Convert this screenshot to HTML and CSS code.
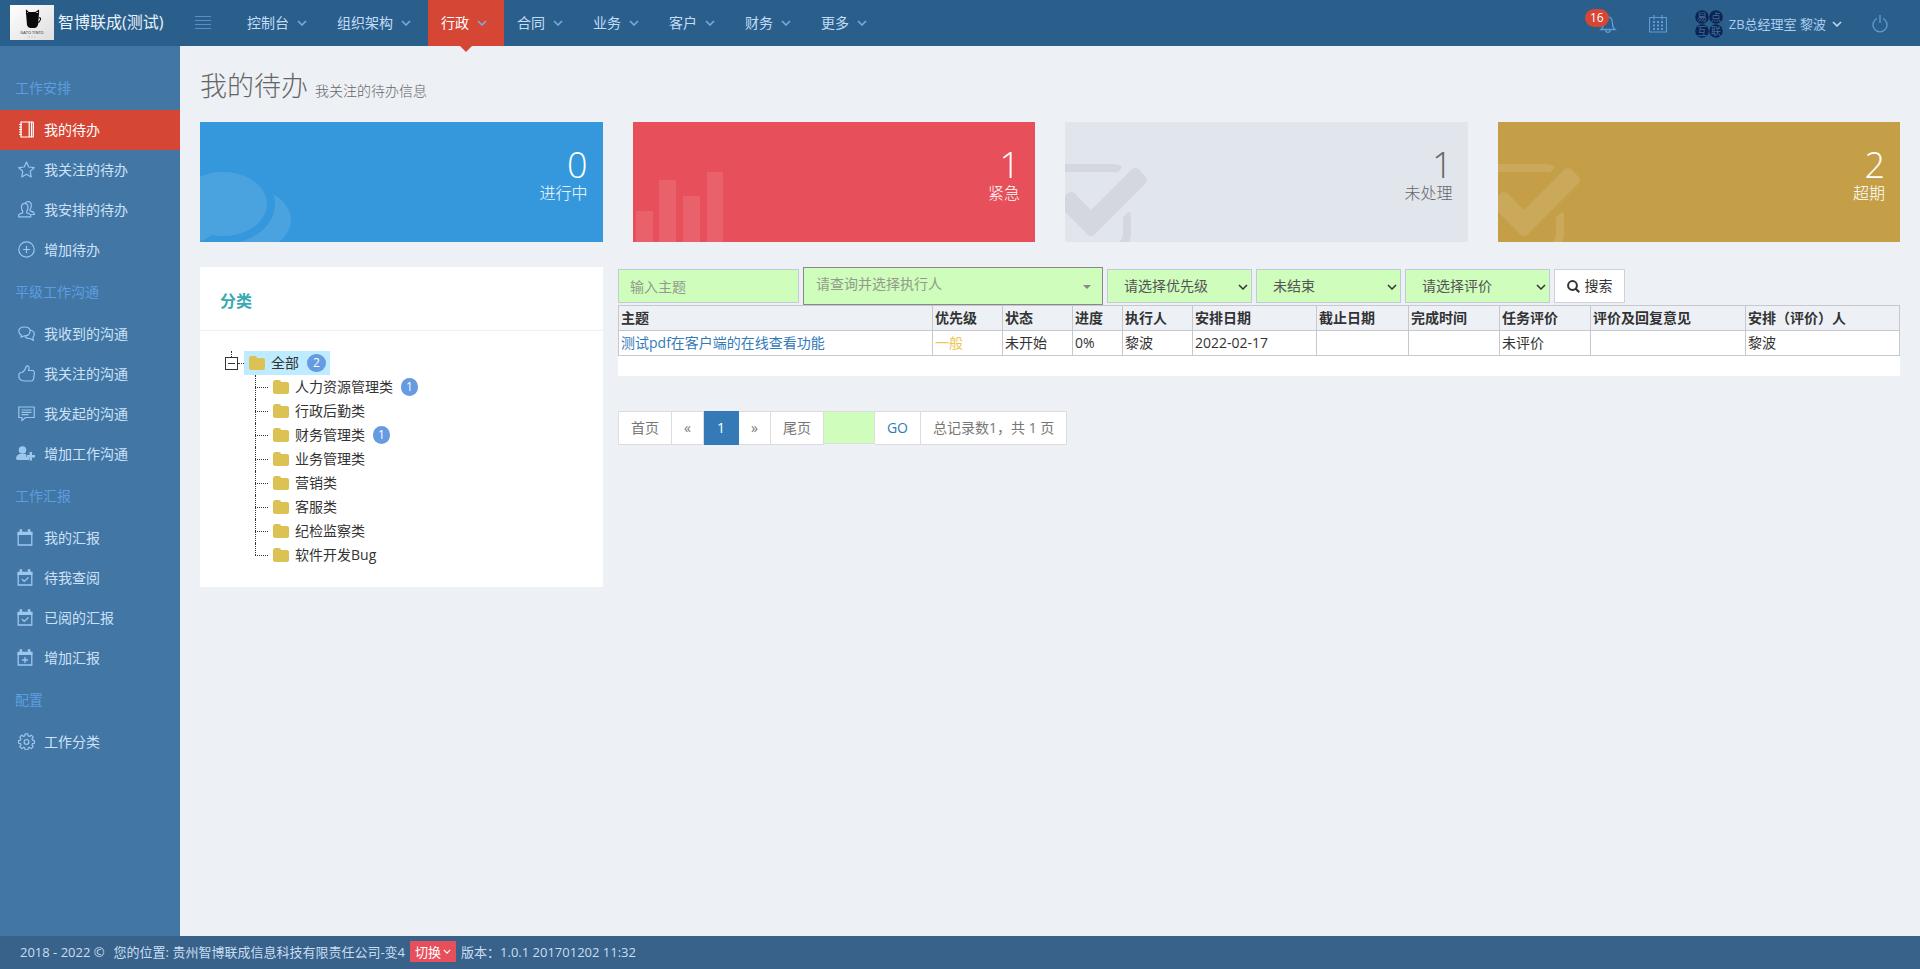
FILE: index.html
```html
<!DOCTYPE html>
<html lang="zh-CN">
<head>
<meta charset="utf-8">
<title>我的待办</title>
<link rel="stylesheet" href="styles.css">
</head>
<body>
<svg class="defs" aria-hidden="true">
  <symbol id="caret" viewBox="0 0 10 6"><path d="M1 1l4 4 4-4" fill="none" stroke="currentColor" stroke-width="1.5"/></symbol>
  <symbol id="folder" viewBox="0 0 16 14"><path d="M0 2.5Q0 0 2 0h4q2 0 2 2h6q2 0 2 2v8q0 2-2 2H2q-2 0-2-2z" fill="currentColor"/></symbol>
  <symbol id="cal" viewBox="0 0 16 17"><path d="M1.2 4h13.6v12H1.2z" fill="none" stroke="currentColor" stroke-width="1.3"/><path d="M.6 2.8h2V1q0-1 1.3-1t1.3 1v1.8h5.6V1q0-1 1.3-1t1.3 1v1.8h2V6H.6z" fill="currentColor"/></symbol>
  <symbol id="calcheck" viewBox="0 0 16 17"><use href="#cal"/><path d="M4.8 10l2.4 2.4 4.3-4" fill="none" stroke="currentColor" stroke-width="1.3"/></symbol>
  <symbol id="calplus" viewBox="0 0 16 17"><use href="#cal"/><path d="M8 8v6M5 11h6" fill="none" stroke="currentColor" stroke-width="1.3"/></symbol>
  <symbol id="check" viewBox="0 0 1792 1792"><path fill="currentColor" d="M1472 930v318q0 119-84.5 203.5t-203.5 84.5h-832q-119 0-203.5-84.5t-84.5-203.5v-832q0-119 84.5-203.5t203.5-84.5h832q63 0 117 25 15 7 18 23 3 17-9 29l-49 49q-10 10-23 10-3 0-9-2-23-6-45-6h-832q-66 0-113 47t-47 113v832q0 66 47 113t113 47h832q66 0 113-47t47-113v-254q0-13 9-22l64-64q10-10 23-10 6 0 12 3 20 8 20 29zm231-489l-814 814q-24 24-57 24t-57-24l-430-430q-24-24-24-57t24-57l110-110q24-24 57-24t57 24l263 263 647-647q24-24 57-24t57 24l110 110q24 24 24 57t-24 57z"/></symbol>
</svg>

<header class="topbar">
  <a class="brand" href="#">
    <svg class="logo" viewBox="0 0 44 35">
      <defs><linearGradient id="lg" x1="0" y1="0" x2="1" y2="1"><stop offset="0" stop-color="#fff"/><stop offset="1" stop-color="#dedede"/></linearGradient></defs>
      <path fill="url(#lg)" d="M0 0h44v35H0z"/>
      <path fill="#0a0a0a" d="M16 8h13l-1 12q-1 3-3 3h-5q-2 0-3-3z"/>
      <path d="M16.500 9V5.500l2 2h7l3-2V9M28.500 13q2.500-.8 2 1.500t-3 3.500" fill="none" stroke="#0a0a0a" stroke-width="1.100"/>
      <text class="logo-name" x="22" y="29" text-anchor="middle">GATO TINTO</text>
      <path d="M18 32h9" stroke="#bbb" stroke-width=".7" stroke-dasharray="2 1"/>
    </svg>
    <span>智博联成(测试)</span>
  </a>
  <button class="toggler" type="button" aria-label="菜单"><svg width="16" height="14" viewBox="0 0 16 14"><path d="M0 .5h16M0 4.500h16M0 8.500h16M0 12.500h16" stroke="currentColor"/></svg></button>
  <nav class="mainnav">
    <a href="#">控制台<svg class="caret"><use href="#caret"/></svg></a>
    <a href="#">组织架构<svg class="caret"><use href="#caret"/></svg></a>
    <a href="#" class="current">行政<svg class="caret"><use href="#caret"/></svg></a>
    <a href="#">合同<svg class="caret"><use href="#caret"/></svg></a>
    <a href="#">业务<svg class="caret"><use href="#caret"/></svg></a>
    <a href="#">客户<svg class="caret"><use href="#caret"/></svg></a>
    <a href="#">财务<svg class="caret"><use href="#caret"/></svg></a>
    <a href="#">更多<svg class="caret"><use href="#caret"/></svg></a>
  </nav>
  <div class="tools">
    <button class="tool bell" type="button" aria-label="通知"><svg width="18" height="18" viewBox="0 0 18 18" fill="none" stroke="currentColor" stroke-width="1.300"><path d="M2 14.500h14q-2.500-2-2.500-6Q13.500 2 9 2T4.500 8.500q0 4-2.500 6zM6.800 15q0 2.300 2.200 2.300t2.200-2.300"/></svg><span class="count">16</span></button>
    <button class="tool" type="button" aria-label="日历"><svg width="18" height="18" viewBox="0 0 18 18"><path d="M.5 2.500h17v14.500H.5zM5 0v4.500M13 0v4.500" fill="none" stroke="currentColor" stroke-width="1.200"/><path d="M4 6h2v2H4zM8 6h2v2H8zM12 6h2v2h-2zM4 9.500h2v2H4zM8 9.500h2v2H8zM12 9.500h2v2h-2zM4 13h2v2H4zM8 13h2v2H8zM12 13h2v2h-2z" fill="currentColor"/></svg></button>
    <button class="user" type="button">
      <svg class="avatar" viewBox="0 0 28 28"><g fill="#0d2450"><circle cx="7" cy="7" r="6.800"/><circle cx="21" cy="7" r="6.800"/><circle cx="7" cy="21" r="6.800"/><circle cx="21" cy="21" r="6.800"/></g><g text-anchor="middle"><text x="7" y="11">易</text><text x="21" y="11">点</text><text x="7" y="25">互</text><text x="21" y="25">联</text></g></svg>
      <span>ZB总经理室 黎波</span><svg class="caret"><use href="#caret"/></svg>
    </button>
    <button class="tool" type="button" aria-label="退出"><svg width="16" height="18" viewBox="0 0 16 18" fill="none" stroke="currentColor" stroke-width="1.300"><path d="M5 3.500a7 7 0 1 0 6 0M8 0v8"/></svg></button>
  </div>
</header>

<div class="body">
  <aside class="sidebar">
    <h3>工作安排</h3>
    <a href="#" class="active"><svg viewBox="0 0 17 17"><path d="M3 1h10.500v15H3zM11.200 1v15M15.300 1v15M13.500 1h2M13.500 16h2M1 3.500h3M1 6h3M1 8.500h3M1 11h3M1 13.500h3" fill="none" stroke="currentColor" stroke-width="1.200"/></svg>我的待办</a>
    <a href="#"><svg viewBox="0 0 17 17"><path d="M8.500 1l2.300 5 5.400.7-4 3.700 1 5.500-4.700-2.700-4.700 2.700 1-5.500-4-3.700L6.200 6z" fill="none" stroke="currentColor" stroke-width="1.200" stroke-linejoin="round"/></svg>我关注的待办</a>
    <a href="#"><svg viewBox="0 0 17 17"><path d="M.7 15.800v-2q1-1.300 4-2v-1.500Q3.500 9 3.500 6.300q0-4 3.200-4T10 6.300q0 2.700-1.300 4v1.500q3.200.7 4 2v2zM7 2Q8 .7 10 .7q3.300 0 3.300 4 0 2.300-1.300 3.600v1.500q3.500.8 4.300 2.400v1.300h-3" fill="none" stroke="currentColor" stroke-width="1.200"/></svg>我安排的待办</a>
    <a href="#"><svg viewBox="0 0 17 17"><path d="M8.500 5v7M5 8.500h7" fill="none" stroke="currentColor" stroke-width="1.200"/><circle cx="8.500" cy="8.500" r="7.700" fill="none" stroke="currentColor" stroke-width="1.200"/></svg>增加待办</a>
    <h3>平级工作沟通</h3>
    <a href="#"><svg viewBox="0 0 17 17"><path d="M3.500 10.500Q.8 9 .8 6.300.8 2 6.500 2T12 6.300q0 4.500-5.500 4.500L3 12.300zM12.300 5q4 .8 4 4.200 0 2.200-1.500 3.200l.7 3-3-1.700q-4 .3-5.500-2" fill="none" stroke="currentColor" stroke-width="1.200" stroke-linejoin="round"/></svg>我收到的沟通</a>
    <a href="#"><svg viewBox="0 0 17 17"><path d="M4 15.500Q.8 14.500.8 10.500q0-3 2.400-3 2.300 0 4-3.500Q8 .8 9.300.8 12 1 10.500 5.500h4q2 0 1.800 3l-.8 5.500q-.3 2-2.500 2H7z" fill="none" stroke="currentColor" stroke-width="1.200" stroke-linejoin="round"/></svg>我关注的沟通</a>
    <a href="#"><svg viewBox="0 0 17 17"><path d="M.8 2h15.400v10.500H7.500L4 15.500v-3H.8zM3.500 5h10M3.500 7.300h10M3.500 9.600h7" fill="none" stroke="currentColor" stroke-width="1.200"/></svg>我发起的沟通</a>
    <a href="#"><svg class="wide" viewBox="0 0 19 17"><g fill="currentColor"><circle cx="6.500" cy="5" r="3.800"/><path d="M3 9h7v3h3v3H1.500Q0 15 0 13t3-4zM13.500 7h2.500v3h3v2.500h-3v3h-2.500v-3h-2.800V10h2.800z"/></g></svg>增加工作沟通</a>
    <h3>工作汇报</h3>
    <a href="#"><svg class="wide" viewBox="-1 0 19 17"><use href="#cal" width="16" height="17"/></svg>我的汇报</a>
    <a href="#"><svg class="wide" viewBox="-1 0 19 17"><use href="#calcheck" width="16" height="17"/></svg>待我查阅</a>
    <a href="#"><svg class="wide" viewBox="-1 0 19 17"><use href="#calcheck" width="16" height="17"/></svg>已阅的汇报</a>
    <a href="#"><svg class="wide" viewBox="-1 0 19 17"><use href="#calplus" width="16" height="17"/></svg>增加汇报</a>
    <h3>配置</h3>
    <a href="#"><svg viewBox="0 0 17 17" fill="none" stroke="currentColor" stroke-width="1.200"><path stroke-linejoin="round" d="M7.200.8h2.600l.5 2.100 1.200.5 1.800-1.200 1.900 1.900-1.200 1.800.5 1.200 2 .5v2.600l-2 .5-.5 1.200 1.200 1.800-1.900 1.900-1.800-1.200-1.200.5-.5 2H7.200l-.5-2-1.200-.5-1.800 1.200-1.900-1.900L3 11.900l-.5-1.200-2-.5V7.600l2-.5L3 5.900 1.800 4.100l1.900-1.900 1.800 1.200 1.200-.5z"/><circle cx="8.500" cy="8.900" r="2.400"/></svg>工作分类</a>
  </aside>

  <main class="content">
    <h1>我的待办 <small>我关注的待办信息</small></h1>

    <section class="stats">
      <a href="#" class="stat blue"><svg class="art chat" viewBox="0 0 1792 1792"><path fill="currentColor" d="M1408 768q0 139-94 257t-256.500 186.500-353.500 68.500q-86 0-176-16-124 88-278 128-36 9-86 16h-3q-11 0-20.500-8t-11.500-21q-1-3-1-6.500t.5-6.500 2-6l2.500-5 3.500-5.500 4-5 4.500-5 4-4.500q5-6 23-25t26-29.500 22.500-29 25-38.500 20.500-44q-124-72-195-177t-71-224q0-139 94-257t256.500-186.500 353.500-68.500 353.500 68.500 256.500 186.500 94 257zm384 256q0 120-71 224.500t-195 176.500q10 24 20.500 44t25 38.500 22.500 29 26 29.500 23 25q1 1 4 4.500t4.500 5 4 5 3.500 5.500l2.500 5 2 6 .5 6.500-1 6.500q-3 14-13 22t-22 7q-50-7-86-16-154-40-278-128-90 16-176 16-271 0-472-132 58 4 88 4 161 0 309-45t264-129q125-92 192-212t67-254q0-77-23-152 129 71 204 180t75 234z"/></svg><b>0</b><span>进行中</span></a>
      <a href="#" class="stat red"><svg class="art bars" viewBox="0 0 92 70"><path fill="currentColor" d="M3 39h17v31H3zM26 8h17v62H26zM50 24h17v46H50zM74 0h16v70H74z"/></svg><b>1</b><span>紧急</span></a>
      <a href="#" class="stat grey"><svg class="art tick"><use href="#check"/></svg><b>1</b><span>未处理</span></a>
      <a href="#" class="stat gold"><svg class="art tick"><use href="#check"/></svg><b>2</b><span>超期</span></a>
    </section>

    <div class="columns">
      <section class="panel">
        <h2>分类</h2>
        <div class="tree">
          <div class="root"><button class="fold" type="button" aria-label="折叠"></button><a href="#" class="node selected"><svg class="folder"><use href="#folder"/></svg>全部<span class="pill">2</span></a></div>
          <ul>
            <li><a href="#" class="node"><svg class="folder"><use href="#folder"/></svg>人力资源管理类<span class="pill">1</span></a></li>
            <li><a href="#" class="node"><svg class="folder"><use href="#folder"/></svg>行政后勤类</a></li>
            <li><a href="#" class="node"><svg class="folder"><use href="#folder"/></svg>财务管理类<span class="pill">1</span></a></li>
            <li><a href="#" class="node"><svg class="folder"><use href="#folder"/></svg>业务管理类</a></li>
            <li><a href="#" class="node"><svg class="folder"><use href="#folder"/></svg>营销类</a></li>
            <li><a href="#" class="node"><svg class="folder"><use href="#folder"/></svg>客服类</a></li>
            <li><a href="#" class="node"><svg class="folder"><use href="#folder"/></svg>纪检监察类</a></li>
            <li><a href="#" class="node"><svg class="folder"><use href="#folder"/></svg>软件开发Bug</a></li>
          </ul>
        </div>
      </section>

      <section class="results">
        <form class="filters">
          <input class="field" type="text" placeholder="输入主题" aria-label="主题">
          <button class="combo" type="button" aria-haspopup="listbox">请查询并选择执行人</button>
          <span class="pick"><select aria-label="优先级"><option>请选择优先级</option></select><svg class="caret"><use href="#caret"/></svg></span>
          <span class="pick"><select aria-label="状态"><option>未结束</option></select><svg class="caret"><use href="#caret"/></svg></span>
          <span class="pick"><select aria-label="评价"><option>请选择评价</option></select><svg class="caret"><use href="#caret"/></svg></span>
          <button class="search" type="button"><svg width="13" height="13" viewBox="0 0 13 13"><circle cx="5.500" cy="5.500" r="4.400" fill="none" stroke="currentColor" stroke-width="2"/><path d="M8.700 8.700l3.500 3.500" stroke="currentColor" stroke-width="2.200"/></svg>搜索</button>
        </form>
        <div class="tablewrap">
          <table>
            <colgroup><col><col class="w70"><col class="w70"><col class="w50"><col class="w70"><col class="w124"><col class="w92"><col class="w91"><col class="w91"><col class="w155"><col class="w154"></colgroup>
            <thead><tr><th>主题</th><th>优先级</th><th>状态</th><th>进度</th><th>执行人</th><th>安排日期</th><th>截止日期</th><th>完成时间</th><th>任务评价</th><th>评价及回复意见</th><th>安排（评价）人</th></tr></thead>
            <tbody><tr><td><a href="#">测试pdf在客户端的在线查看功能</a></td><td class="normal">一般</td><td>未开始</td><td>0%</td><td>黎波</td><td>2022-02-17</td><td></td><td></td><td>未评价</td><td></td><td>黎波</td></tr></tbody>
          </table>
        </div>
        <nav class="pager" aria-label="分页">
          <a href="#">首页</a><a href="#">«</a><a href="#" class="on">1</a><a href="#">»</a><a href="#">尾页</a><input type="text" aria-label="页码"><a href="#" class="go">GO</a><span>总记录数1，共 1 页</span>
        </nav>
      </section>
    </div>
  </main>
</div>

<footer class="footer">
  <span class="years">2018 - 2022 ©</span>
  <span>您的位置: 贵州智博联成信息科技有限责任公司-变4</span>
  <button type="button">切换<svg class="caret"><use href="#caret"/></svg></button>
  <span>版本：1.0.1 201701202 11:32</span>
</footer>
</body>
</html>
```
FILE: styles.css
```css
* { box-sizing: border-box; }
body {
  margin: 0;
  min-height: 100vh;
  display: flex;
  flex-direction: column;
  background: #edf1f6;
  color: #333;
  font: 14px/20px "Open Sans", "Noto Sans CJK SC", sans-serif;
}
a { color: inherit; text-decoration: none; }
button, input, select { font: inherit; color: inherit; margin: 0; border: 0; border-radius: 0; background: none; }
button { padding: 0; cursor: pointer; }
svg { flex: none; display: block; }
h1, h2, h3, ul { margin: 0; padding: 0; font-weight: 400; }
.defs { position: absolute; width: 0; height: 0; }
.caret { width: 10px; height: 6px; }

.topbar { display: flex; align-items: stretch; height: 46px; background: #2b5f8b; color: #c2ddf7; }
.brand { display: flex; align-items: center; gap: 4px; width: 195px; padding: 0 0 2px 10px; color: #e8f2fc; font-size: 16px; }
.logo { width: 44px; height: 35px; }
.logo-name { font-family: "Open Sans", sans-serif; font-size: 4px; fill: #222; }
.toggler { width: 16px; color: #5590c8; }
.mainnav { display: flex; margin-left: 23px; }
.mainnav a { position: relative; display: flex; align-items: center; gap: 8px; padding: 0 17px 0 13px; }
.mainnav .caret { color: #7caee0; }
.mainnav .current { background: #d64635; color: #fff; }
.mainnav .current::after { content: ""; position: absolute; left: 50%; top: 100%; margin-left: -6px; border: 6px solid transparent; border-top-color: #d64635; border-bottom: 0; }
.tools { display: flex; align-items: center; margin-left: auto; padding: 2px 32px 0 0; gap: 28px; }
.tool { color: #5e9cd6; }
.bell { position: relative; margin-right: 4px; }
.count { position: absolute; left: -14px; top: -6px; width: 24px; height: 18px; border-radius: 9px; background: #d64635; color: #fff; font-size: 12px; line-height: 18px; }
.user { display: flex; align-items: center; gap: 6px; margin-right: 2px; font-size: 13px; color: #a9cdf0; }
.avatar { width: 28px; height: 28px; font-size: 10px; fill: #3d6c9d; }
.user .caret { color: #c2ddf7; }

.body { flex: 1; display: flex; }
.sidebar { flex: none; width: 180px; padding-top: 20px; background: #4276a5; color: #cce2f8; }
.sidebar h3 { padding: 12px 15px; font-size: 14px; line-height: 20px; color: #5c9edf; }
.sidebar a { display: flex; align-items: center; gap: 9px; height: 40px; padding-left: 18px; }
.sidebar a svg { width: 17px; height: 17px; margin-bottom: 2px; color: #9cc6ee; }
.sidebar a .wide { width: 19px; margin-left: -2px; }
.sidebar .active, .sidebar .active svg { color: #fff; }
.sidebar .active { background: #d64635; }

.content { flex: 1; min-width: 0; padding: 20px; }
h1 { margin-bottom: 11px; font-size: 27px; line-height: 40px; font-weight: 300; color: #666; }
h1 small { font-size: 14px; }
.stats { display: grid; grid-template-columns: repeat(4, 1fr); gap: 30px; margin-bottom: 25px; }
.stat { position: relative; overflow: hidden; display: flex; flex-direction: column; align-items: flex-end; height: 120px; padding: 25px 15px 0; color: #fff; font-weight: 300; }
.stat b { font-size: 36px; line-height: 36px; font-weight: 300; }
.stat span { font-size: 16px; line-height: 20px; }
.blue { background: #3598dc; }
.red { background: #e7505a; }
.grey { background: #e1e5ec; color: #666; }
.gold { background: #c49f47; }
.art { position: absolute; top: 34px; width: 112px; height: 112px; color: #fff; opacity: .1; }
.chat { left: -21px; }
.tick { left: -26px; }
.bars { left: 0; top: 50px; width: 92px; height: 70px; }
.grey .art { color: #6b5b7b; }

.columns { display: grid; grid-template-columns: 403fr 1282fr; gap: 15px; align-items: start; }
.panel { background: #fff; padding-bottom: 20px; }
.panel h2 { padding: 24px 20px 19px; border-bottom: 1px solid #eef1f5; font-size: 16px; line-height: 20px; font-weight: 600; color: #3aa9b2; }
.tree { padding: 20px 25px 0; }
.root { position: relative; display: flex; align-items: center; height: 24px; }
.root::before { content: ""; position: absolute; left: 6px; top: 0; height: 6px; border-left: 1px dotted #333; }
.root::after { content: ""; position: absolute; left: 13px; top: 12px; width: 6px; border-top: 1px dotted #333; }
.fold { width: 13px; height: 13px; margin-right: 6px; border: 1px solid #333; display: grid; place-items: center; }
.fold::before { content: ""; width: 7px; height: 1px; background: #333; }
.node { display: inline-flex; align-items: center; height: 24px; padding: 0 4px 0 5px; }
.selected { background: #beebff; }
.folder { width: 16px; height: 14px; margin-right: 6px; color: #dcc154; }
.pill { min-width: 17px; height: 18px; margin-left: 8px; padding: 0 5px; border-radius: 9px; background: #659be0; color: #fff; font-size: 12px; line-height: 18px; text-align: center; }
.selected .pill { padding: 0 6px; }
.tree ul { list-style: none; margin-left: 30px; }
.tree li { position: relative; display: flex; height: 24px; padding-left: 13px; }
.tree li::before { content: ""; position: absolute; left: 0; top: 0; height: 24px; border-left: 1px dotted #333; }
.tree li::after { content: ""; position: absolute; left: 0; top: 12px; width: 13px; border-top: 1px dotted #333; }
.tree li:last-child::before { height: 12px; }

.filters { display: flex; align-items: center; gap: 4px; height: 38px; }
.field { width: 181px; height: 34px; padding: 0 11px; border: 1px solid #c2cad8; background: #cffdbc; }
.field::placeholder { color: #8f9c8b; opacity: 1; }
.combo { position: relative; width: 300px; height: 38px; padding: 0 12px 4px; border: 1px solid #888; background: #cffdbc; color: #8f9c8b; text-align: left; }
.combo::after { content: ""; position: absolute; right: 11px; top: 17px; border: 4px solid transparent; border-top-color: #888; border-bottom: 0; }
.pick { position: relative; width: 145px; color: #555; }
.pick select { display: block; width: 100%; height: 34px; padding: 0 16px; appearance: none; border: 1px solid #c2cad8; background: #cffdbc; }
.pick .caret { position: absolute; right: 4px; top: 15px; color: #333; }
.search { display: flex; align-items: center; justify-content: center; gap: 5px; width: 71px; height: 34px; border: 1px solid #ccd1dc; background: #fff; }
.tablewrap { padding-bottom: 20px; background: #fff; }
table { width: 100%; table-layout: fixed; border-collapse: collapse; }
.w50 { width: 50px; }
.w70 { width: 70px; }
.w91 { width: 91px; }
.w92 { width: 92px; }
.w124 { width: 124px; }
.w154 { width: 154px; }
.w155 { width: 155px; }
th, td { height: 25px; padding: 2px; border: 1px solid #c6c8ce; text-align: left; white-space: nowrap; line-height: 20px; }
th { background: #edf1f6; font-weight: 700; }
td a { color: #337ab7; }
.normal { color: #f0c550; }
.pager { display: flex; margin-top: 35px; color: #777; }
.pager > * { height: 34px; padding: 6px 12px; border: 1px solid #ddd; background: #fff; }
.pager > * + * { border-left: 0; }
.pager .on { padding: 6px 13px; border-color: #337ab7; background: #337ab7; color: #fff; }
.pager input { width: 51px; height: 33px; background: #cffdbc; }
.pager .go { color: #337ab7; }

.footer { display: flex; align-items: center; gap: 5px; height: 33px; padding: 0 20px 2px; background: #386289; color: #c8def4; font-size: 13px; }
.footer .years { margin-right: 4px; }
.footer button { display: flex; align-items: center; gap: 2px; height: 21px; padding: 0 5px; background: #e7505a; color: #fff; }
.footer .caret { width: 8px; height: 5px; }
```
